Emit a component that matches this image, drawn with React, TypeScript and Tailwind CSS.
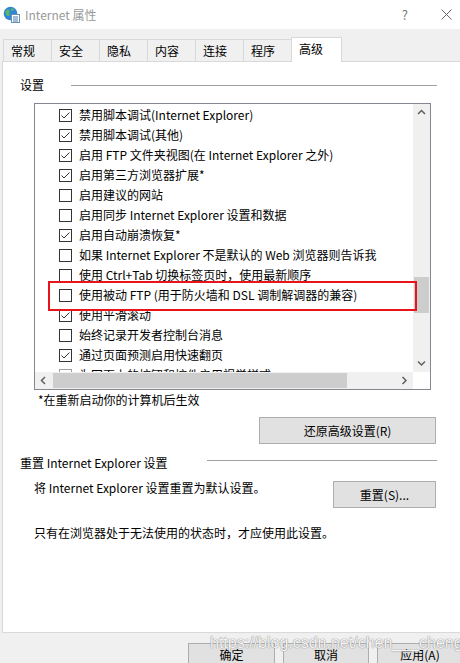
import React from 'react';

const tabs = ['常规', '安全', '隐私', '内容', '连接', '程序'];

const rows: { checked: boolean; label: string; dim?: boolean }[] = [
  { checked: true, label: '禁用脚本调试(Internet Explorer)' },
  { checked: true, label: '禁用脚本调试(其他)' },
  { checked: true, label: '启用 FTP 文件夹视图(在 Internet Explorer 之外)' },
  { checked: true, label: '启用第三方浏览器扩展*' },
  { checked: false, label: '启用建议的网站' },
  { checked: false, label: '启用同步 Internet Explorer 设置和数据' },
  { checked: true, label: '启用自动崩溃恢复*' },
  { checked: false, label: '如果 Internet Explorer 不是默认的 Web 浏览器则告诉我' },
  { checked: false, label: '使用 Ctrl+Tab 切换标签页时，使用最新顺序' },
  { checked: false, label: '使用被动 FTP (用于防火墙和 DSL 调制解调器的兼容)' },
  { checked: true, label: '使用平滑滚动' },
  { checked: false, label: '始终记录开发者控制台消息' },
  { checked: true, label: '通过页面预测启用快速翻页' },
  { checked: false, label: '为网页上的按钮和控件启用视觉样式', dim: true },
];

const CheckBox = ({ checked, dim }: { checked: boolean; dim?: boolean }) => (
  <span
    className={`flex h-[13px] w-[13px] shrink-0 items-center justify-center border bg-white ${
      dim ? 'border-[#a0a0a0]' : 'border-[#333333]'
    }`}
  >
    {checked && (
      <svg width="11" height="11" viewBox="0 0 11 11">
        <polyline points="1.5,5.5 4,8 9.5,2.5" fill="none" stroke="#333" strokeWidth="1" />
      </svg>
    )}
  </span>
);

const Chevron = ({ dir }: { dir: 'up' | 'down' | 'left' | 'right' }) => {
  const pts = {
    up: '1,5 4.5,1.5 8,5',
    down: '1,1.5 4.5,5 8,1.5',
    left: '5,1 1.5,4.5 5,8',
    right: '1.5,1 5,4.5 1.5,8',
  }[dir];
  const horiz = dir === 'left' || dir === 'right';
  return (
    <svg width={horiz ? 7 : 9} height={horiz ? 9 : 7} viewBox={horiz ? '0 0 7 9' : '0 0 9 7'}>
      <polyline points={pts} fill="none" stroke="#606060" strokeWidth="1.5" />
    </svg>
  );
};

const WinButton = ({ label, className }: { label: string; className: string }) => (
  <div
    className={`flex items-center justify-center border border-[#adadad] bg-[#e1e1e1] text-black ${className}`}
  >
    {label}
  </div>
);

export default function App() {
  return (
    <div className="relative h-[663px] w-[460px] overflow-hidden bg-[#f0f0f0] font-['Noto_Sans_CJK_SC',sans-serif] text-[12px] leading-[16px] text-black">
      {/* Title bar */}
      <div className="flex h-[29px] items-center bg-white">
        <svg className="ml-[3px]" width="17" height="17" viewBox="0 0 17 17">
          <circle cx="7.5" cy="7.5" r="6.8" fill="#2f86d6" />
          <path d="M3 4.5c1.5-1.5 3-1 3.5 0.5s-1 2 0 3.2-1.5 2.5-2.5 1.5S1.8 5.8 3 4.5z" fill="#5cb85c" />
          <path d="M8 2.2c1.6 0 3 0.8 3.6 1.8-1 0.5-2 0-2.6 0.8S7.5 3.5 8 2.2z" fill="#5cb85c" />
          <rect x="8.5" y="8.5" width="8" height="8" fill="#fff" stroke="#6a8fb5" strokeWidth="1" />
          <line x1="10" y1="11" x2="15" y2="11" stroke="#4a78b0" strokeWidth="1" />
          <line x1="10" y1="13" x2="15" y2="13" stroke="#4a78b0" strokeWidth="1" />
          <line x1="10" y1="15" x2="15" y2="15" stroke="#4a78b0" strokeWidth="1" />
        </svg>
        <span className="ml-[5px] text-[#999999]">Internet 属性</span>
        <span className="ml-auto mr-[33px] text-[13px] text-[#777777]">?</span>
        <svg className="mr-[8px]" width="11" height="11" viewBox="0 0 11 11">
          <line x1="0.5" y1="0.5" x2="10.5" y2="10.5" stroke="#666" strokeWidth="1" />
          <line x1="10.5" y1="0.5" x2="0.5" y2="10.5" stroke="#666" strokeWidth="1" />
        </svg>
      </div>

      {/* Tabs */}
      <div className="mt-[8px] flex h-[24px] items-end pl-[3px]">
        {tabs.map((t) => (
          <div
            key={t}
            className="flex h-[22px] w-[48px] items-center border-l border-t border-[#d9d9d9] bg-[#f0f0f0] pl-[7px] pt-px"
          >
            {t}
          </div>
        ))}
        <div className="relative z-10 -mb-px flex h-[25px] w-[51px] items-start border-l border-r border-t border-[#d9d9d9] bg-white pl-[7px] pt-[3px]">
          高级
        </div>
      </div>

      {/* Panel */}
      <div className="ml-[2px] h-[572px] w-[480px] border border-[#d9d9d9] bg-white">
        <div className="ml-[17px] flex w-[417px] flex-col">
          <div className="mt-[15px] flex h-[16px] items-center">
            <span>设置</span>
            <div className="ml-auto h-px w-[366px] bg-[#a0a0a0]" />
          </div>

          {/* List box */}
          <div className="ml-[14px] mt-[10px] flex h-[287px] w-[397px] flex-col border border-[#828790] bg-white">
            <div className="flex h-[268px]">
              <div className="w-[378px] overflow-hidden pl-[24px] pt-px">
                {rows.map((r, i) => (
                  <div key={i} className="flex h-[20px] items-center gap-[7px] whitespace-nowrap">
                    <CheckBox checked={r.checked} dim={r.dim} />
                    <span>{r.label}</span>
                  </div>
                ))}
              </div>
              <div className="flex w-[17px] flex-col bg-[#f0f0f0]">
                <div className="flex h-[17px] items-center justify-center">
                  <Chevron dir="up" />
                </div>
                <div className="flex-1">
                  <div className="mx-px mt-[156px] h-[36px] bg-[#cdcdcd]" />
                </div>
                <div className="flex h-[17px] items-center justify-center">
                  <Chevron dir="down" />
                </div>
              </div>
            </div>
            <div className="flex h-[17px]">
              <div className="flex w-[378px] items-stretch bg-[#f0f0f0]">
                <div className="flex w-[17px] items-center justify-center">
                  <Chevron dir="left" />
                </div>
                <div className="my-px ml-px w-[294px] bg-[#cdcdcd]" />
                <div className="ml-auto flex w-[17px] items-center justify-center">
                  <Chevron dir="right" />
                </div>
              </div>
              <div className="w-[17px] bg-white" />
            </div>
          </div>

          <div className="ml-[18px] mt-[2px]">*在重新启动你的计算机后生效</div>

          <WinButton label="还原高级设置(R)" className="mr-px mt-[9px] h-[27px] w-[177px] self-end" />

          <div className="mt-[11px] flex h-[16px] items-start">
            <span>重置 Internet Explorer 设置</span>
            <div className="ml-auto mt-[5px] h-px w-[230px] bg-[#a0a0a0]" />
          </div>

          <div className="mt-[9px] flex items-start">
            <span className="ml-[14px]">将 Internet Explorer 设置重置为默认设置。</span>
            <WinButton label="重置(S)..." className="ml-auto mr-px mt-px h-[27px] w-[103px]" />
          </div>

          <div className="ml-[14px] mt-[17px]">只有在浏览器处于无法使用的状态时，才应使用此设置。</div>
        </div>
      </div>

      {/* Dialog buttons */}
      <div className="mt-[10px] flex gap-[8px] pl-[188px]">
        <WinButton label="确定" className="h-[24px] w-[87px] shrink-0" />
        <WinButton label="取消" className="h-[24px] w-[86px] shrink-0" />
        <WinButton label="应用(A)" className="h-[24px] w-[86px] shrink-0" />
      </div>

      {/* Red highlight */}
      <div className="absolute left-[48px] top-[281px] h-[30px] w-[369px] border-2 border-[#e8141c]" />

      {/* Watermark */}
      <div className="absolute left-[210px] top-[634px] font-['Liberation_Sans',sans-serif] text-[16px] leading-[18px] text-white/90 [text-shadow:0_0_1px_#8a8a8a,0_0_1px_#8a8a8a]">
        https://blog.csdn.net/chen___cheng
      </div>
    </div>
  );
}
